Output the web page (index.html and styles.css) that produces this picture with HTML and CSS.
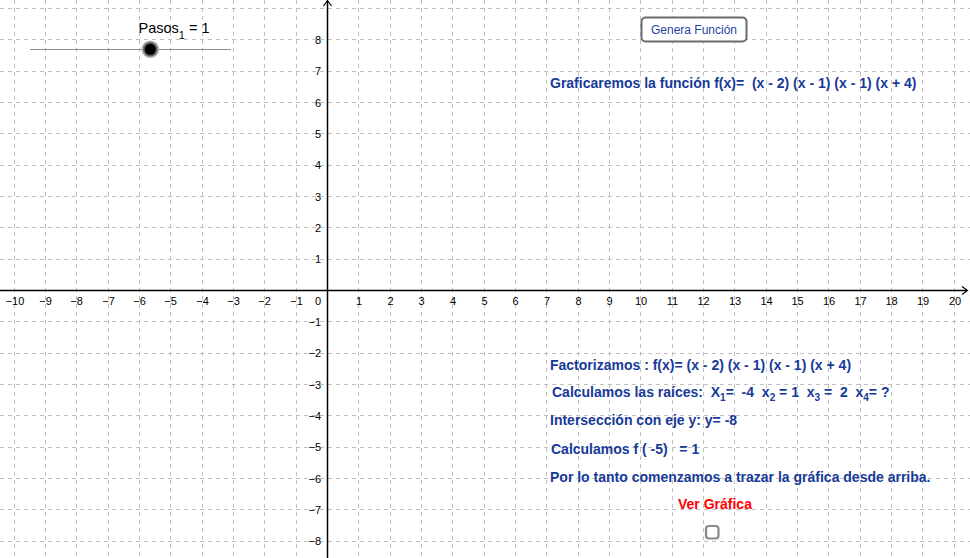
FILE: index.html
```html
<!DOCTYPE html>
<html lang="es">
<head>
<meta charset="utf-8">
<title>Gráfica</title>
<link rel="stylesheet" href="styles.css">
</head>
<body>
<div class="applet">
<svg class="board" width="970" height="558" viewBox="0 0 970 558" xmlns="http://www.w3.org/2000/svg">
  <g class="grid">
    <line x1="14.5" y1="0" x2="14.5" y2="558"/>
    <line x1="45.5" y1="0" x2="45.5" y2="558"/>
    <line x1="76.5" y1="0" x2="76.5" y2="558"/>
    <line x1="108.5" y1="0" x2="108.5" y2="558"/>
    <line x1="139.5" y1="0" x2="139.5" y2="558"/>
    <line x1="170.5" y1="0" x2="170.5" y2="558"/>
    <line x1="202.5" y1="0" x2="202.5" y2="558"/>
    <line x1="233.5" y1="0" x2="233.5" y2="558"/>
    <line x1="264.5" y1="0" x2="264.5" y2="558"/>
    <line x1="296.5" y1="0" x2="296.5" y2="558"/>
    <line x1="358.5" y1="0" x2="358.5" y2="558"/>
    <line x1="390.5" y1="0" x2="390.5" y2="558"/>
    <line x1="421.5" y1="0" x2="421.5" y2="558"/>
    <line x1="452.5" y1="0" x2="452.5" y2="558"/>
    <line x1="484.5" y1="0" x2="484.5" y2="558"/>
    <line x1="515.5" y1="0" x2="515.5" y2="558"/>
    <line x1="546.5" y1="0" x2="546.5" y2="558"/>
    <line x1="578.5" y1="0" x2="578.5" y2="558"/>
    <line x1="609.5" y1="0" x2="609.5" y2="558"/>
    <line x1="640.5" y1="0" x2="640.5" y2="558"/>
    <line x1="672.5" y1="0" x2="672.5" y2="558"/>
    <line x1="703.5" y1="0" x2="703.5" y2="558"/>
    <line x1="734.5" y1="0" x2="734.5" y2="558"/>
    <line x1="766.5" y1="0" x2="766.5" y2="558"/>
    <line x1="797.5" y1="0" x2="797.5" y2="558"/>
    <line x1="828.5" y1="0" x2="828.5" y2="558"/>
    <line x1="860.5" y1="0" x2="860.5" y2="558"/>
    <line x1="891.5" y1="0" x2="891.5" y2="558"/>
    <line x1="922.5" y1="0" x2="922.5" y2="558"/>
    <line x1="954.5" y1="0" x2="954.5" y2="558"/>

    <line x1="0" y1="8.5" x2="970" y2="8.5"/>
    <line x1="0" y1="39.5" x2="970" y2="39.5"/>
    <line x1="0" y1="71.5" x2="970" y2="71.5"/>
    <line x1="0" y1="102.5" x2="970" y2="102.5"/>
    <line x1="0" y1="133.5" x2="970" y2="133.5"/>
    <line x1="0" y1="165.5" x2="970" y2="165.5"/>
    <line x1="0" y1="196.5" x2="970" y2="196.5"/>
    <line x1="0" y1="227.5" x2="970" y2="227.5"/>
    <line x1="0" y1="259.5" x2="970" y2="259.5"/>
    <line x1="0" y1="321.5" x2="970" y2="321.5"/>
    <line x1="0" y1="353.5" x2="970" y2="353.5"/>
    <line x1="0" y1="384.5" x2="970" y2="384.5"/>
    <line x1="0" y1="415.5" x2="970" y2="415.5"/>
    <line x1="0" y1="447.5" x2="970" y2="447.5"/>
    <line x1="0" y1="478.5" x2="970" y2="478.5"/>
    <line x1="0" y1="509.5" x2="970" y2="509.5"/>
    <line x1="0" y1="541.5" x2="970" y2="541.5"/>
  </g>

  <g class="axes">
    <line x1="0" y1="290.5" x2="967" y2="290.5"/>
    <polyline class="arrow" points="962,286.5 967.5,290.5 962,294.5"/>
    <line x1="327.5" y1="1" x2="327.5" y2="558"/>
    <polyline class="arrow" points="323.5,6 327.5,0.5 331.5,6"/>
  </g>

  <g class="xlabels">
    <text x="15" y="305">−10</text>
    <text x="45.5" y="305">−9</text>
    <text x="76.5" y="305">−8</text>
    <text x="108.5" y="305">−7</text>
    <text x="139.5" y="305">−6</text>
    <text x="170.5" y="305">−5</text>
    <text x="202.5" y="305">−4</text>
    <text x="233.5" y="305">−3</text>
    <text x="264.5" y="305">−2</text>
    <text x="296.5" y="305">−1</text>
    <text x="359" y="305">1</text>
    <text x="390.5" y="305">2</text>
    <text x="421.5" y="305">3</text>
    <text x="453" y="305">4</text>
    <text x="484.5" y="305">5</text>
    <text x="515.5" y="305">6</text>
    <text x="547" y="305">7</text>
    <text x="578.5" y="305">8</text>
    <text x="609.5" y="305">9</text>
    <text x="641" y="305">10</text>
    <text x="672.5" y="305">11</text>
    <text x="703.5" y="305">12</text>
    <text x="735" y="305">13</text>
    <text x="766.5" y="305">14</text>
    <text x="797.5" y="305">15</text>
    <text x="829" y="305">16</text>
    <text x="860.5" y="305">17</text>
    <text x="891.5" y="305">18</text>
    <text x="923" y="305">19</text>
    <text x="955" y="305">20</text>
  </g>
  <text class="origin" x="318" y="305">0</text>

  <g class="ylabels">
    <text x="321" y="44">8</text>
    <text x="321" y="75">7</text>
    <text x="321" y="106.5">6</text>
    <text x="321" y="138">5</text>
    <text x="321" y="169">4</text>
    <text x="321" y="200.5">3</text>
    <text x="321" y="232">2</text>
    <text x="321" y="263">1</text>
    <text x="321" y="326">−1</text>
    <text x="321" y="357">−2</text>
    <text x="321" y="388.5">−3</text>
    <text x="321" y="420">−4</text>
    <text x="321" y="451">−5</text>
    <text x="321" y="482.5">−6</text>
    <text x="321" y="514">−7</text>
    <text x="321" y="545">−8</text>
  </g>

  <!-- slider -->
  <line class="slider-track" x1="30" y1="49.5" x2="231" y2="49.5"/>
  <circle class="knob-halo" cx="150.3" cy="49.3" r="8.8"/>
  <circle class="knob-ring" cx="150.3" cy="49.3" r="7.2"/>
  <circle class="knob" cx="150.3" cy="49.3" r="5.5"/>
  <text class="slider-label" x="138.5" y="33.3">Pasos<tspan class="sub" dy="5.5">1</tspan><tspan dy="-5.5"> = 1</tspan></text>

  <!-- button -->
  <rect class="btn" x="641.5" y="17.5" width="105" height="24" rx="4" ry="4"/>
  <text class="btn-text" x="694" y="33.5">Genera Función</text>

  <!-- texts -->
  <text class="note" x="550" y="88">Graficaremos la función f(x)=  (x - 2) (x - 1) (x - 1) (x + 4)</text>
  <text class="note" x="550" y="370">Factorizamos : f(x)= (x - 2) (x - 1) (x - 1) (x + 4)</text>
  <text class="note" x="552" y="397">Calculamos las raíces:  X<tspan class="nsub" dy="4">1</tspan><tspan dy="-4">=  -4  x</tspan><tspan class="nsub" dy="4">2</tspan><tspan dy="-4"> = 1  x</tspan><tspan class="nsub" dy="4">3</tspan><tspan dy="-4"> =  2  x</tspan><tspan class="nsub" dy="4">4</tspan><tspan dy="-4">= ?</tspan></text>
  <text class="note" x="550" y="425">Intersección con eje y: y= -8</text>
  <text class="note" x="551" y="453.5">Calculamos f ( -5)   = 1</text>
  <text class="note" x="550" y="482">Por lo tanto comenzamos a trazar la gráfica desde arriba.</text>
  <text class="note red" x="678" y="508.5">Ver Gráfica</text>

  <!-- checkbox -->
  <rect class="check" x="706" y="526" width="12.5" height="12.5" rx="3" ry="3"/>
</svg>
</div>
</body>
</html>
```

FILE: styles.css
```css
html, body {
  margin: 0;
  padding: 0;
  background: #ffffff;
}

.applet {
  width: 970px;
  height: 558px;
  overflow: hidden;
  background: #ffffff;
}

.board {
  display: block;
  font-family: "Liberation Sans", Arial, sans-serif;
}

.grid line {
  stroke: #c0c0c0;
  stroke-width: 1;
  stroke-dasharray: 4 4;
}

.axes line {
  stroke: #000000;
  stroke-width: 1.5;
}

.axes .arrow {
  fill: none;
  stroke: #000000;
  stroke-width: 1.2;
}

.xlabels text {
  font-size: 11px;
  fill: #000000;
  text-anchor: middle;
}

.origin {
  font-size: 11px;
  fill: #000000;
  text-anchor: middle;
}

.ylabels text {
  font-size: 11px;
  fill: #000000;
  text-anchor: end;
}

.slider-track {
  stroke: #8c8c8c;
  stroke-width: 1;
}

.knob-halo {
  fill: #b4b4b4;
}

.knob-ring {
  fill: #5e5e5e;
}

.knob {
  fill: #000000;
}

.slider-label {
  font-size: 14.5px;
  fill: #000000;
  white-space: pre;
}

.slider-label .sub {
  font-size: 11px;
}

.btn {
  fill: #ffffff;
  stroke: #6b6b6b;
  stroke-width: 2;
}

.btn-text {
  font-size: 12px;
  fill: #1f3f9f;
  text-anchor: middle;
}

.note {
  font-size: 14px;
  font-weight: bold;
  fill: #173a99;
  white-space: pre;
}

.note .nsub {
  font-size: 10px;
}

.note.red {
  fill: #ff0000;
}

.check {
  fill: #ffffff;
  stroke: #8a8a8a;
  stroke-width: 2.2;
}
```
